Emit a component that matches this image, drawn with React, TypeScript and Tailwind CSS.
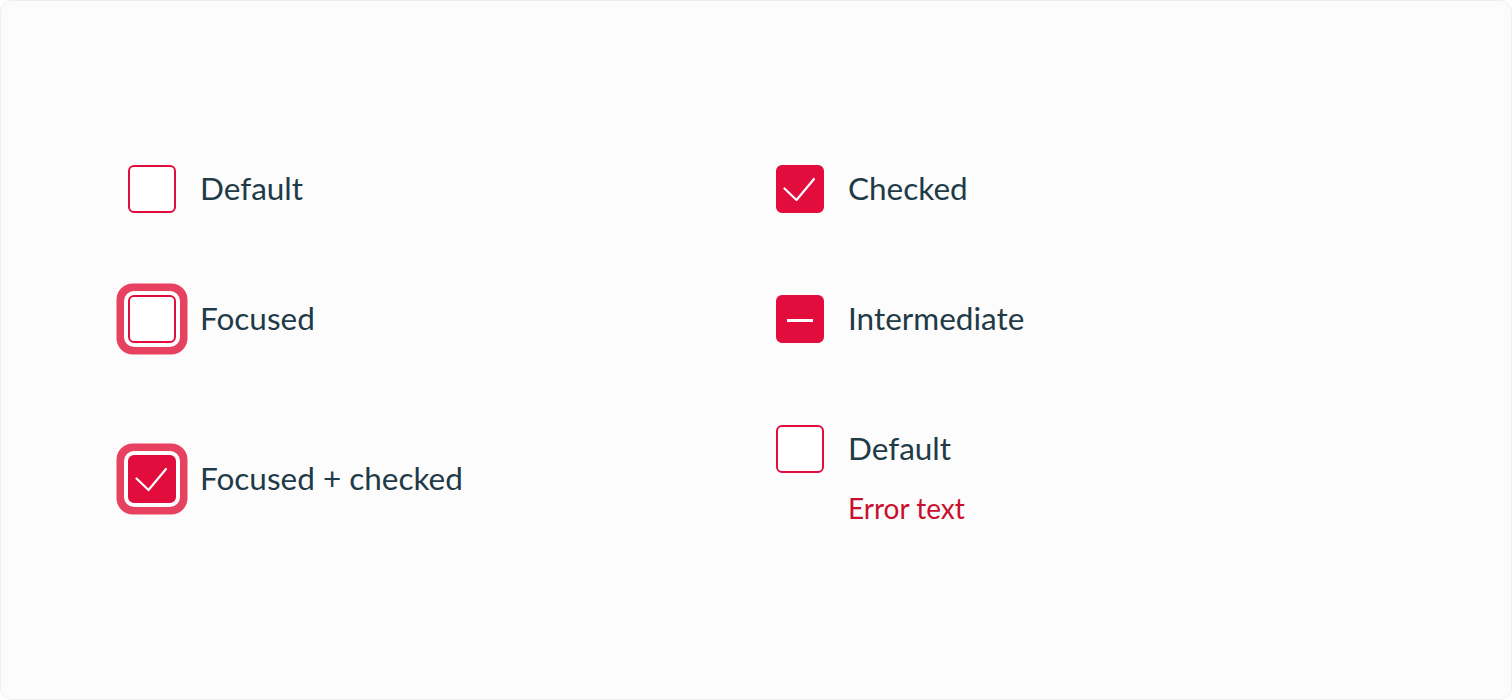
import React from "react";

function Check() {
  return (
    <svg width="48" height="48" viewBox="0 0 48 48" className="absolute left-[-2px] top-[-2px]" fill="none">
      <path d="M8.5 23.5 L20.5 35 L38 14" stroke="white" strokeWidth="2.2" strokeLinecap="round" strokeLinejoin="round" />
    </svg>
  );
}

function Box({ checked, indeterminate, focused }: { checked?: boolean; indeterminate?: boolean; focused?: boolean }) {
  const filled = checked || indeterminate;
  return (
    <div
      className={
        "relative w-[48px] h-[48px] shrink-0 rounded-[6px] border-2 border-[#e20d3d] " +
        (filled ? "bg-[#e20d3d] " : "bg-white ") +
        (focused ? "shadow-[0_0_0_4px_#ffffff,0_0_0_11.5px_#e8415f]" : "")
      }
    >
      {checked && <Check />}
      {indeterminate && (
        <div className="absolute left-[9px] top-[21.5px] w-[26px] h-[3px] bg-white" />
      )}
    </div>
  );
}

function Row({ label, children }: { label: string; children: React.ReactNode }) {
  return (
    <div className="flex items-center gap-[24px] h-[48px]">
      {children}
      <span className="text-[31.5px] text-[#1f3b47] leading-none">{label}</span>
    </div>
  );
}

export default function App() {
  return (
    <div className="w-[1512px] h-[700px] bg-white" style={{ fontFamily: "Lato, 'Noto Sans', sans-serif" }}>
      <div className="w-full h-full bg-[#fcfcfc] border border-[#eeeeee] rounded-[12px] flex pl-[127px] pt-[164px]">
        <div className="w-[648px] flex flex-col">
          <Row label="Default"><Box /></Row>
          <div className="mt-[82px]"><Row label="Focused"><Box focused /></Row></div>
          <div className="mt-[112px]"><Row label="Focused + checked"><Box focused checked /></Row></div>
        </div>
        <div className="flex flex-col">
          <Row label="Checked"><Box checked /></Row>
          <div className="mt-[82px]"><Row label="Intermediate"><Box indeterminate /></Row></div>
          <div className="mt-[82px]"><Row label="Default"><Box /></Row></div>
          <div className="pl-[72px] mt-[21px] text-[28px] leading-none text-[#c8102e]">Error text</div>
        </div>
      </div>
    </div>
  );
}
